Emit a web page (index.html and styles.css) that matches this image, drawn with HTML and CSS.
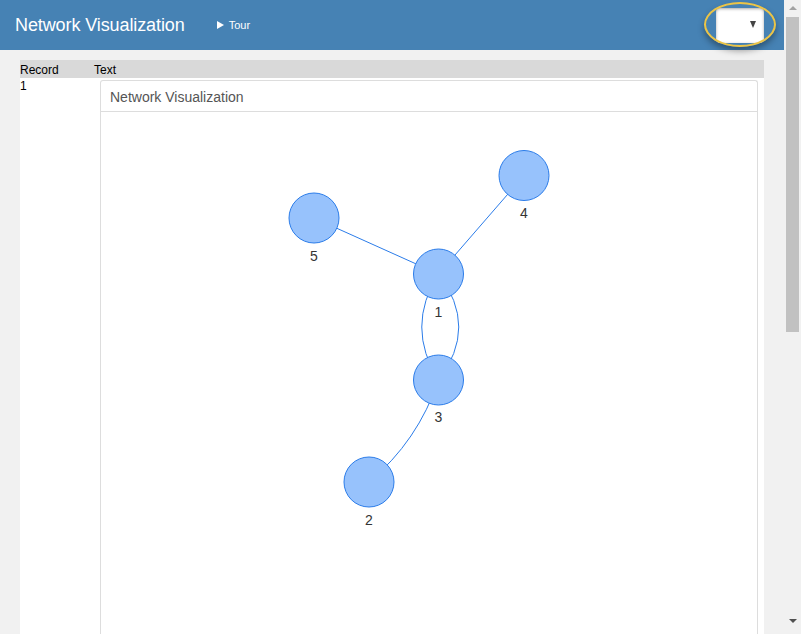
FILE: index.html
```html
<!DOCTYPE html>
<html>
<head>
<meta charset="utf-8">
<link rel="stylesheet" href="styles.css">
</head>
<body>
<div class="app">
  <div class="main">
    <header class="topbar">
      <div class="brand">Network Visualization</div>
      <div class="tour"><span class="play"></span>Tour</div>
      <div class="spacer"></div>
      <div class="select">
        <span class="caret"></span>
        <span class="ring"></span>
      </div>
    </header>
    <div class="content">
      <div class="table">
        <div class="thead">
          <div class="th th-record">Record</div>
          <div class="th">Text</div>
        </div>
        <div class="trow">
          <div class="td td-record">1</div>
          <div class="td td-text">
            <div class="panel">
              <div class="panel-heading">Network Visualization</div>
              <div class="panel-body">
                <svg class="graph" width="656" height="540" viewBox="101 112 656 540">
                  <g class="edges" fill="none" stroke="#2b7ce9" stroke-width="1">
                    <line x1="314" y1="218" x2="438.5" y2="274"/>
                    <line x1="524" y1="175.5" x2="438.5" y2="274"/>
                    <path d="M438.5 274 Q405 327 438.5 380"/>
                    <path d="M438.5 274 Q479 327 438.5 380"/>
                    <path d="M438.5 380 Q418 441 369 482"/>
                  </g>
                  <g class="nodes" fill="#97c2fc" stroke="#2b7ce9" stroke-width="1">
                    <circle cx="314" cy="218" r="25"/>
                    <circle cx="524" cy="175.5" r="25"/>
                    <circle cx="438.5" cy="274" r="25"/>
                    <circle cx="438.5" cy="380" r="25"/>
                    <circle cx="369" cy="482" r="25"/>
                  </g>
                  <g class="labels" text-anchor="middle">
                    <text x="314" y="261">5</text>
                    <text x="524" y="218">4</text>
                    <text x="438.5" y="317">1</text>
                    <text x="438.5" y="422">3</text>
                    <text x="369" y="525">2</text>
                  </g>
                </svg>
              </div>
            </div>
          </div>
        </div>
      </div>
    </div>
  </div>
  <div class="scrollbar">
    <span class="sb-up"></span>
    <div class="sb-thumb"></div>
    <div class="sb-fill"></div>
    <span class="sb-down"></span>
  </div>
</div>
</body>
</html>
```

FILE: styles.css
```css
html, body {
  margin: 0;
  padding: 0;
  height: 634px;
  overflow: hidden;
  background: #f1f1f1;
  font-family: "Liberation Sans", Arial, sans-serif;
}

.app {
  display: flex;
  height: 634px;
}

.main {
  width: 784px;
  flex: none;
  display: flex;
  flex-direction: column;
}

.topbar {
  height: 50px;
  background: #4682b4;
  display: flex;
  align-items: center;
  padding: 0 20px 0 15px;
  color: #fff;
  flex: none;
}

.brand {
  font-size: 18px;
  line-height: 20px;
  letter-spacing: -0.1px;
}

.tour {
  margin-left: 32px;
  font-size: 11px;
  display: flex;
  align-items: center;
}

.play {
  width: 0;
  height: 0;
  border-top: 4.5px solid transparent;
  border-bottom: 4.5px solid transparent;
  border-left: 7px solid #fff;
  margin-right: 5px;
}

.spacer {
  flex: 1;
}

.select {
  position: relative;
  width: 48px;
  height: 35px;
  background: #fff;
  border-radius: 4px;
  box-shadow: 0 1px 3px rgba(0, 0, 0, 0.35) inset;
  margin-top: 1px;
}

.caret {
  position: absolute;
  left: 34px;
  top: 13px;
  width: 0;
  height: 0;
  border-left: 3.5px solid transparent;
  border-right: 3.5px solid transparent;
  border-top: 7px solid #444;
}

.ring {
  position: absolute;
  left: -12px;
  top: -6px;
  width: 68px;
  height: 41px;
  border: 2px solid #ecc445;
  border-radius: 50%;
  box-shadow: 0 4px 6px rgba(0, 0, 0, 0.35);
}

.content {
  flex: 1;
  padding: 10px 20px 0 20px;
  overflow: hidden;
}

.table {
  background: #fff;
  height: 100%;
  display: flex;
  flex-direction: column;
}

.thead {
  display: flex;
  background: #d9d9d9;
  height: 18px;
  font-size: 12px;
  line-height: 20px;
  color: #000;
}

.th-record {
  width: 74px;
}

.trow {
  display: flex;
  flex: 1;
}

.td {
  font-size: 12px;
  color: #000;
}

.td-record {
  width: 80px;
  line-height: 16px;
  margin-top: 0;
}

.td-text {
  flex: 1;
  padding: 2px 6px 0 0;
  display: flex;
}

.panel {
  flex: 1;
  border: 1px solid #ddd;
  border-radius: 3px 3px 0 0;
  border-bottom: none;
  background: #fff;
  display: flex;
  flex-direction: column;
}

.panel-heading {
  height: 30px;
  line-height: 32px;
  padding: 0 9px;
  font-size: 14px;
  color: #555;
  border-bottom: 1px solid #ddd;
}

.panel-body {
  flex: 1;
  overflow: hidden;
}

.graph {
  display: block;
}

.labels text {
  font-family: "Liberation Sans", Arial, sans-serif;
  font-size: 14px;
  fill: #343434;
}

.scrollbar {
  width: 17px;
  flex: none;
  background: #f1f1f1;
  display: flex;
  flex-direction: column;
  align-items: center;
  position: relative;
}

.sb-up {
  width: 0;
  height: 0;
  border-left: 4px solid transparent;
  border-right: 4px solid transparent;
  border-bottom: 4px solid #a3a3a3;
  margin-top: 6px;
}

.sb-thumb {
  width: 13px;
  height: 315px;
  background: #c1c1c1;
  margin-top: 7px;
}

.sb-fill {
  flex: 1;
}

.sb-down {
  width: 0;
  height: 0;
  border-left: 4px solid transparent;
  border-right: 4px solid transparent;
  border-top: 4px solid #505050;
  margin-bottom: 11px;
}
```
